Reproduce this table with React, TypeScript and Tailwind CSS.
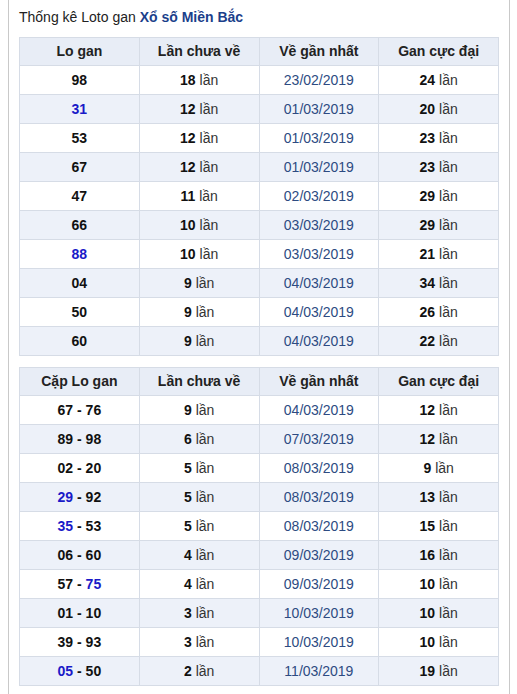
const loGan: [string, boolean, string, string, string][] = [
  ["98", false, "18", "23/02/2019", "24"],
  ["31", true, "12", "01/03/2019", "20"],
  ["53", false, "12", "01/03/2019", "23"],
  ["67", false, "12", "01/03/2019", "23"],
  ["47", false, "11", "02/03/2019", "29"],
  ["66", false, "10", "03/03/2019", "29"],
  ["88", true, "10", "03/03/2019", "21"],
  ["04", false, "9", "04/03/2019", "34"],
  ["50", false, "9", "04/03/2019", "26"],
  ["60", false, "9", "04/03/2019", "22"],
]

// [a, aBlue, b, bBlue, lan, date, max]
const capGan: [string, boolean, string, boolean, string, string, string][] = [
  ["67", false, "76", false, "9", "04/03/2019", "12"],
  ["89", false, "98", false, "6", "07/03/2019", "12"],
  ["02", false, "20", false, "5", "08/03/2019", "9"],
  ["29", true, "92", false, "5", "08/03/2019", "13"],
  ["35", true, "53", false, "5", "08/03/2019", "15"],
  ["06", false, "60", false, "4", "09/03/2019", "16"],
  ["57", false, "75", true, "4", "09/03/2019", "10"],
  ["01", false, "10", false, "3", "10/03/2019", "10"],
  ["39", false, "93", false, "3", "10/03/2019", "10"],
  ["05", true, "50", false, "2", "11/03/2019", "19"],
]

const th = "border border-[#d6dce6] h-[28px] p-0 text-[14px] font-bold text-[#222] text-center"
const td = "border border-[#d6dce6] h-[29px] p-0 text-[14px] text-center"

const Head = ({ first }: { first: string }) => (
  <thead>
    <tr className="bg-[#e8edf6]">
      <th className={th}>{first}</th>
      <th className={th}>Lần chưa về</th>
      <th className={th}>Về gần nhất</th>
      <th className={th}>Gan cực đại</th>
    </tr>
  </thead>
)

const Lan = ({ n }: { n: string }) => (
  <>
    <b className="text-[#111]">{n}</b> <span className="text-[#333]">lần</span>
  </>
)

export default function App() {
  return (
    <div className="min-h-[694px] mx-[8px] w-[502px] border-x border-[#c9c9c9] bg-white px-[10px] pt-[7px] font-['Liberation_Sans',Arial,sans-serif]">
      <p className="text-[14px] leading-[20px] text-[#222] mb-[10px]">
        Thống kê Loto gan <b className="text-[#1b3f8b]">Xổ số Miền Bắc</b>
      </p>

      <table className="w-[480px] table-fixed border-collapse">
        <Head first="Lo gan" />
        <tbody>
          {loGan.map(([so, blue, lan, date, max], i) => (
            <tr key={so} className={i % 2 ? "bg-[#edf1f9]" : "bg-white"}>
              <td className={`${td} font-bold ${blue ? "text-[#1a1ac8]" : "text-[#111]"}`}>{so}</td>
              <td className={td}><Lan n={lan} /></td>
              <td className={`${td} text-[#2d4b82]`}>{date}</td>
              <td className={td}><Lan n={max} /></td>
            </tr>
          ))}
        </tbody>
      </table>

      <table className="w-[480px] table-fixed border-collapse mt-[11px]">
        <Head first="Cặp Lo gan" />
        <tbody>
          {capGan.map(([a, aBlue, b, bBlue, lan, date, max], i) => (
            <tr key={a + b} className={i % 2 ? "bg-[#edf1f9]" : "bg-white"}>
              <td className={`${td} font-bold text-[#111]`}>
                <span className={aBlue ? "text-[#1a1ac8]" : ""}>{a}</span> -{" "}
                <span className={bBlue ? "text-[#1a1ac8]" : ""}>{b}</span>
              </td>
              <td className={td}><Lan n={lan} /></td>
              <td className={`${td} text-[#2d4b82]`}>{date}</td>
              <td className={td}><Lan n={max} /></td>
            </tr>
          ))}
        </tbody>
      </table>
    </div>
  )
}
